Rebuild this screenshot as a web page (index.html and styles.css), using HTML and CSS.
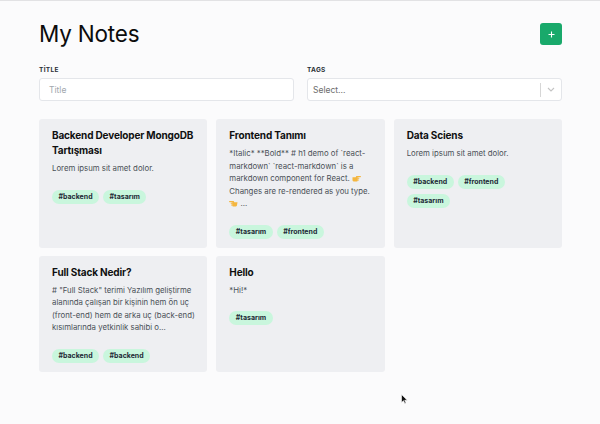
FILE: index.html
```html
<!DOCTYPE html>
<html lang="tr">
<head>
<meta charset="utf-8">
<title>My Notes</title>
<link rel="stylesheet" href="styles.css">
</head>
<body>
<div class="page">
  <header class="header">
    <h1 class="heading">My Notes</h1>
    <button class="add-btn" type="button" aria-label="Add">
      <svg width="7" height="7" viewBox="0 0 7 7"><path d="M3.5 0.5v6M0.5 3.5h6" stroke="#fff" stroke-width="1.1" fill="none"/></svg>
    </button>
  </header>

  <div class="filters">
    <div class="field">
      <label class="field-label">Title</label>
      <div class="input"><span class="placeholder">Title</span></div>
    </div>
    <div class="field">
      <label class="field-label">Tags</label>
      <div class="input select">
        <span class="select-placeholder">Select...</span>
        <span class="select-indicators">
          <span class="select-sep"></span>
          <svg class="chev" width="8" height="5" viewBox="0 0 8 5"><path d="M1 1l3 3 3-3" stroke="#c4c4c4" stroke-width="1.1" fill="none"/></svg>
        </span>
      </div>
    </div>
  </div>

  <div class="grid">
    <div class="card">
      <h2 class="card-title">Backend Developer MongoDB Tartışması</h2>
      <p class="card-body">Lorem ipsum sit amet dolor.</p>
      <div class="tags"><span class="tag">#backend</span><span class="tag">#tasarım</span></div>
    </div>
    <div class="card">
      <h2 class="card-title">Frontend Tanımı</h2>
      <p class="card-body">*Italic* **Bold** # h1 demo of `react-markdown` `react-markdown` is a markdown component for React. <svg class="emoji" width="9" height="7" viewBox="0 0 9 7"><path d="M0.5 2.2h3.2l0.6-1.2h4.1a0.6 0.6 0 0 1 0 1.2H5.6v0.6h1.2a0.5 0.5 0 0 1 0 1h-1.2v0.6h0.9a0.5 0.5 0 0 1 0 1h-0.9v0.4a0.6 0.6 0 0 1-0.6 0.6H1.6a1.1 1.1 0 0 1-1.1-1.1z" fill="#f4b63f"/></svg> Changes are re-rendered as you type. <svg class="emoji" width="9" height="7" viewBox="0 0 9 7"><path d="M8.5 2.2H5.3L4.7 1H0.6a0.6 0.6 0 0 0 0 1.2h2.8v0.6H2.2a0.5 0.5 0 0 0 0 1h1.2v0.6h-0.9a0.5 0.5 0 0 0 0 1h0.9v0.4a0.6 0.6 0 0 0 0.6 0.6h2.9a1.1 1.1 0 0 0 1.1-1.1z" fill="#f4b63f"/></svg> ...</p>
      <div class="tags"><span class="tag">#tasarım</span><span class="tag">#frontend</span></div>
    </div>
    <div class="card">
      <h2 class="card-title">Data Sciens</h2>
      <p class="card-body">Lorem ipsum sit amet dolor.</p>
      <div class="tags"><span class="tag">#backend</span><span class="tag">#frontend</span><span class="tag">#tasarım</span></div>
    </div>
    <div class="card">
      <h2 class="card-title">Full Stack Nedir?</h2>
      <p class="card-body"># "Full Stack" terimi Yazılım geliştirme alanında çalışan bir kişinin hem ön uç (front-end) hem de arka uç (back-end) kısımlarında yetkinlik sahibi o...</p>
      <div class="tags"><span class="tag">#backend</span><span class="tag">#backend</span></div>
    </div>
    <div class="card">
      <h2 class="card-title">Hello</h2>
      <p class="card-body">*Hi!*</p>
      <div class="tags"><span class="tag">#tasarım</span></div>
    </div>
  </div>
</div>
<svg class="cursor" width="7" height="10" viewBox="0 0 7 10"><path d="M0.5 0.5v8l2-1.8 1.3 2.8 1.2-0.6-1.3-2.7h2.6z" fill="#111" stroke="#fff" stroke-width="0.6"/></svg>
</body>
</html>
```
FILE: styles.css
```css
* { box-sizing: border-box; }
html, body { margin: 0; padding: 0; }
body {
  background: #fbfbfc;
  border-top: 1px solid #e2e2e4;
  font-family: Inter, "Noto Sans", "Liberation Sans", sans-serif;
  color: #111;
  min-height: 424px;
  position: relative;
}
.page {
  width: 523px;
  margin-left: 39px;
  padding-top: 21px;
}
.header {
  display: flex;
  justify-content: space-between;
  align-items: center;
}
.heading {
  margin: 0;
  font-size: 22.5px;
  line-height: 24px;
  font-weight: 400;
  color: #0c0c0c;
  letter-spacing: -0.2px;
}
.add-btn {
  width: 22px;
  height: 22px;
  border: none;
  border-radius: 3px;
  background: #19a96b;
  padding: 0;
  display: flex;
  align-items: center;
  justify-content: center;
}
.filters {
  display: grid;
  grid-template-columns: 1fr 1fr;
  column-gap: 13px;
  margin-top: 20px;
}
.field { display: flex; flex-direction: column; }
.field-label {
  font-size: 6.5px;
  line-height: 9px;
  font-weight: 700;
  text-transform: uppercase;
  letter-spacing: 0.3px;
  color: #2a2f36;
  margin-bottom: 3px;
}
.input {
  height: 23px;
  background: #fff;
  border: 1px solid #e4e6ea;
  border-radius: 3px;
  display: flex;
  align-items: center;
  padding-left: 9px;
  font-size: 8.5px;
}
.placeholder { color: #a2a7ae; }
.select { padding-left: 5px; justify-content: space-between; }
.select-placeholder { color: #6d6d6d; }
.select-indicators { display: flex; align-items: center; height: 100%; }
.select-sep { width: 1px; height: 14px; background: #d6d6d6; }
.chev { margin: 0 6px 0 6px; }
.grid {
  display: grid;
  grid-template-columns: repeat(3, 1fr);
  column-gap: 9px;
  row-gap: 8px;
  margin-top: 18px;
}
.card {
  background: #eeeff2;
  border-radius: 3px;
  padding: 9px 11px 9px 13px;
  display: flex;
  flex-direction: column;
}
.card-title {
  margin: 0;
  font-size: 10px;
  line-height: 15px;
  font-weight: 700;
  letter-spacing: -0.15px;
  color: #0f0f10;
}
.card-body {
  margin: 4px 1px 0 0;
  font-size: 7.8px;
  line-height: 12.5px;
  color: #4a4f57;
}
.emoji { vertical-align: -1px; }
.tags {
  display: flex;
  flex-wrap: wrap;
  gap: 5px 4px;
  margin-top: 15px;
}
.tag {
  height: 14px;
  line-height: 14px;
  padding: 0 6.5px;
  border-radius: 7px;
  background: #c9f6dd;
  color: #1e2a36;
  font-size: 7px;
  font-weight: 700;
}
.cursor { position: absolute; left: 401px; top: 393px; }
```
